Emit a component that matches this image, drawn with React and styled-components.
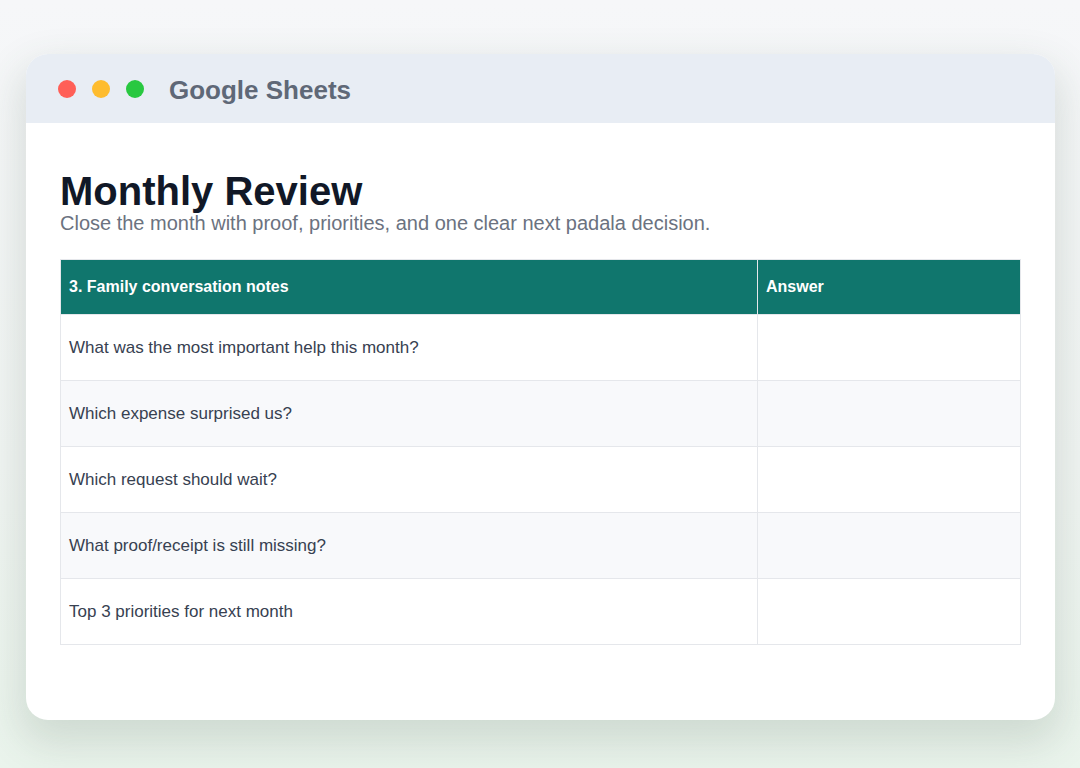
import styled, { createGlobalStyle } from 'styled-components'

const GlobalStyle = createGlobalStyle`
  html, body {
    margin: 0;
    padding: 0;
  }
  body {
    min-height: 768px;
    background: linear-gradient(180deg, #f6f7f9 0%, #f1f5f3 60%, #eaf4ec 100%);
    font-family: "Liberation Sans", Arial, sans-serif;
  }
`;

const Page = styled.div`
  padding: 54px 25px 50px 26px;
`;

const Window = styled.div`
  background: #ffffff;
  border-radius: 22px;
  overflow: hidden;
  box-shadow: 0 18px 40px 6px rgba(60, 90, 70, 0.16);
`;

const TitleBar = styled.div`
  height: 69px;
  background: #e8edf4;
  display: flex;
  align-items: center;
  padding-left: 32px;
`;

const Dots = styled.div`
  display: flex;
  gap: 16px;
  margin-right: 25px;
`;

const Dot = styled.span`
  width: 18px;
  height: 18px;
  border-radius: 50%;
  background: ${(props) => props.color};
`;

const AppName = styled.div`
  font-size: 26px;
  font-weight: bold;
  color: #5f6877;
  margin-top: 3px;
`;

const Body = styled.div`
  padding: 47px 34px 75px 34px;
`;

const Heading = styled.h1`
  margin: 0;
  font-size: 40px;
  line-height: 42px;
  font-weight: 900;
  color: #111827;
`;

const Subtitle = styled.p`
  margin: 0 0 24px 0;
  font-size: 20px;
  line-height: 23px;
  color: #6b7280;
`;

const Table = styled.table`
  width: 100%;
  border-collapse: collapse;
  border: 1px solid #e5e7eb;
`;

const HeadCell = styled.th`
  background: #10766d;
  color: #ffffff;
  text-align: left;
  font-size: 16px;
  font-weight: bold;
  height: 54px;
  padding: 0 8px;
  border-left: 1px solid #e5e7eb;
  width: ${(props) => props.width || 'auto'};
`;

const Row = styled.tr`
  background: ${(props) => (props.alt ? '#f8f9fb' : '#ffffff')};
`;

const Cell = styled.td`
  height: 65px;
  padding: 0 8px;
  font-size: 17px;
  color: #374151;
  border: 1px solid #e5e7eb;
`;

const questions = [
  'What was the most important help this month?',
  'Which expense surprised us?',
  'Which request should wait?',
  'What proof/receipt is still missing?',
  'Top 3 priorities for next month',
]

function App() {
  return (
    <>
      <GlobalStyle />
      <Page>
        <Window>
          <TitleBar>
            <Dots>
              <Dot color="#ff5f57" />
              <Dot color="#febc2e" />
              <Dot color="#28c840" />
            </Dots>
            <AppName>Google Sheets</AppName>
          </TitleBar>
          <Body>
            <Heading>Monthly Review</Heading>
            <Subtitle>
              Close the month with proof, priorities, and one clear next padala decision.
            </Subtitle>
            <Table>
              <thead>
                <tr>
                  <HeadCell width="680px">3. Family conversation notes</HeadCell>
                  <HeadCell>Answer</HeadCell>
                </tr>
              </thead>
              <tbody>
                {questions.map((q, i) => (
                  <Row key={q} alt={i % 2 === 1}>
                    <Cell>{q}</Cell>
                    <Cell />
                  </Row>
                ))}
              </tbody>
            </Table>
          </Body>
        </Window>
      </Page>
    </>
  )
}

export default App
